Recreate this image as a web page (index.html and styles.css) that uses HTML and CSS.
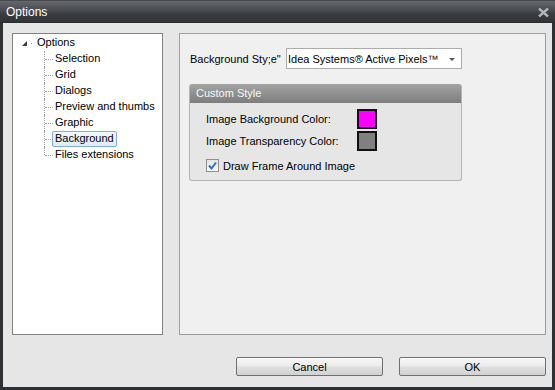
FILE: index.html
```html
<!DOCTYPE html>
<html lang="en">
<head>
    <meta charset="UTF-8">
    <title>Options</title>
    <link rel="stylesheet" href="styles.css">
</head>
<body>
    <div class="window">
        <div class="titlebar">
            <span class="title">Options</span>
            <svg class="close" width="11" height="9" viewBox="0 0 11 9">
                <path d="M1 0.5 L10 8.5 M10 0.5 L1 8.5" stroke="#b4b8be" stroke-width="2.4" />
            </svg>
        </div>

        <div class="client">
            <div class="main">
                <div class="tree">
                    <div class="root">
                        <span class="expander"></span>
                        <span class="dot"></span>
                        <span class="node">Options</span>
                    </div>
                    <ul class="children">
                        <li><span class="node">Selection</span></li>
                        <li><span class="node">Grid</span></li>
                        <li><span class="node">Dialogs</span></li>
                        <li><span class="node">Preview and thumbs</span></li>
                        <li><span class="node">Graphic</span></li>
                        <li><span class="node selected">Background</span></li>
                        <li><span class="node">Files extensions</span></li>
                    </ul>
                </div>

                <div class="panel">
                    <div class="style-row">
                        <span class="style-label">Background Sty;e"</span>
                        <div class="select">
                            <span>Idea Systems® Active Pixels™</span>
                            <span class="arrow"></span>
                        </div>
                    </div>

                    <div class="group">
                        <div class="group-head">Custom Style</div>
                        <div class="group-body">
                            <div class="color-grid">
                                <span>Image Background Color:</span>
                                <span class="swatch magenta"></span>
                                <span>Image Transparency Color:</span>
                                <span class="swatch grey"></span>
                            </div>
                            <label class="check-row">
                                <span class="checkbox">
                                    <svg width="11" height="11" viewBox="0 0 11 11">
                                        <path d="M2 5.5 L4.5 8.5 L9 2.5" fill="none" stroke="#2d6ec4" stroke-width="2" />
                                    </svg>
                                </span>
                                Draw Frame Around Image
                            </label>
                        </div>
                    </div>
                </div>
            </div>

            <div class="buttons">
                <button>Cancel</button>
                <button>OK</button>
            </div>
        </div>
    </div>
</body>
</html>
```

FILE: styles.css
```css
body {
    margin: 0;
    font-family: 'Liberation Sans', Arial, sans-serif;
    font-size: 11px;
    color: #000;
    background: #2e3033;
}

.window {
    width: 555px;
    height: 390px;
    box-sizing: border-box;
    background: #2e3033;
    padding: 0 3px 3px 3px;
}

/* title bar */
.titlebar {
    height: 23px;
    margin: 0 -3px;
    padding: 0 6px 0 6px;
    display: flex;
    align-items: center;
    justify-content: space-between;
    background: linear-gradient(to bottom, #2c2e31 0, #64676c 1px, #55585d 6px, #47494d 11px, #3a3c40 14px, #323437 22px, #26272a 23px);
}

.title {
    color: #fff;
    font-size: 12px;
    margin-top: 1px;
}

.close {
    display: block;
    margin-top: 2px;
}

/* client area */
.client {
    height: 364px;
    box-sizing: border-box;
    background: #e6e6e6;
    padding: 10px 6px 0 9px;
}

.main {
    display: flex;
    gap: 16px;
}

.tree {
    width: 151px;
    height: 302px;
    box-sizing: border-box;
    background: #fff;
    border: 1px solid #828282;
    padding-top: 1px;
}

.root {
    height: 16px;
    display: flex;
    align-items: center;
}

.expander {
    width: 0;
    height: 0;
    margin-left: 9px;
    border-left: 5px solid transparent;
    border-bottom: 5px solid #3c3c3c;
    margin-top: 1px;
}

.dot {
    width: 1px;
    height: 1px;
    background: #a0a0a0;
    margin: 1px 0 0 4px;
}

.root .node {
    margin-left: 2px;
}

.node {
    display: inline-block;
    height: 14px;
    line-height: 13px;
    padding: 0 2px;
    border: 1px solid transparent;
    border-radius: 2px;
    white-space: nowrap;
}

.node.selected {
    border-color: #84acdd;
    background: linear-gradient(to bottom, #f2f8fe, #dcebfc);
}

.children {
    list-style: none;
    margin: 0 0 0 31px;
    padding: 0;
}

.children li {
    position: relative;
    height: 16px;
    padding-left: 8px;
}

.children li::before {
    content: "";
    position: absolute;
    left: 0;
    top: 0;
    bottom: 0;
    border-left: 1px dotted #a0a0a0;
}

.children li:last-child::before {
    bottom: 8px;
}

.children li::after {
    content: "";
    position: absolute;
    left: 1px;
    top: 8px;
    width: 8px;
    border-top: 1px dotted #a0a0a0;
}

/* right panel */
.panel {
    width: 367px;
    height: 302px;
    box-sizing: border-box;
    background: #f0f0f0;
    border: 1px solid #a0a0a0;
    border-right-color: #9a9a9a;
    border-bottom-color: #9a9a9a;
    padding: 14px 0 0 9px;
}

.style-row {
    display: flex;
    align-items: center;
    height: 21px;
}

.style-label {
    width: 96px;
    margin-left: 1px;
}

.select {
    width: 176px;
    height: 21px;
    box-sizing: border-box;
    background: #fff;
    border: 1px solid #acacac;
    display: flex;
    align-items: center;
    justify-content: space-between;
    padding: 0 6px 0 1px;
}

.arrow {
    width: 0;
    height: 0;
    border-left: 3px solid transparent;
    border-right: 3px solid transparent;
    border-top: 3px solid #555;
    margin-top: 1px;
}

.group {
    width: 273px;
    height: 97px;
    box-sizing: border-box;
    margin-top: 15px;
    border: 1px solid #b4b4b4;
    border-top: none;
    border-radius: 3px;
    background: #e6e6e6;
    overflow: hidden;
}

.group-head {
    height: 19px;
    line-height: 19px;
    padding-left: 6px;
    color: #f7f7f7;
    background: linear-gradient(to bottom, #a3a3a3, #7d7d7d);
}

.group-body {
    padding: 6px 0 0 16px;
}

.color-grid {
    display: grid;
    grid-template-columns: 151px 20px;
    grid-auto-rows: 20px;
    row-gap: 2px;
    align-items: center;
}

.swatch {
    width: 20px;
    height: 20px;
    box-sizing: border-box;
    border: 2px solid #111;
}

.magenta {
    background: #ff00ff;
}

.grey {
    background: #808080;
}

.check-row {
    display: flex;
    align-items: center;
    gap: 4px;
    margin-top: 8px;
    height: 13px;
}

.checkbox {
    width: 13px;
    height: 13px;
    box-sizing: border-box;
    border: 1px solid #8f8f8f;
    background: linear-gradient(to bottom, #e4e4e4, #fafafa);
    display: flex;
    align-items: center;
    justify-content: center;
}

.checkbox svg {
    display: block;
}

/* buttons */
.buttons {
    display: flex;
    justify-content: flex-end;
    gap: 16px;
    margin-top: 22px;
}

button {
    width: 147px;
    height: 19px;
    padding: 0;
    font-family: inherit;
    font-size: 11px;
    color: #000;
    border: 1px solid #707070;
    border-radius: 2px;
    background: linear-gradient(to bottom, #f6f6f6 0, #ececec 45%, #dedede 55%, #d2d2d2 100%);
    box-shadow: inset 0 1px 0 #fff;
}
```
